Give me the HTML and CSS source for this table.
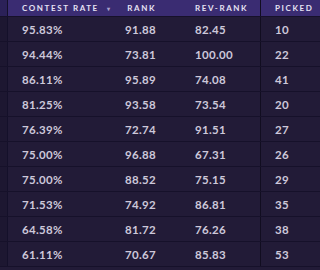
FILE: index.html
```html
<!DOCTYPE html>
<html>
<head>
<meta charset="utf-8">
<link rel="stylesheet" href="styles.css">
</head>
<body>
<div class="table">
  <div class="row head">
    <div class="cell strip"></div>
    <div class="cell c1">CONTEST RATE <span class="sort">&#9662;</span></div>
    <div class="cell c2">RANK</div>
    <div class="cell c3">REV-RANK</div>
    <div class="cell c4">PICKED</div>
  </div>
  <div class="row"><div class="cell strip"></div><div class="cell c1">95.83%</div><div class="cell c2">91.88</div><div class="cell c3">82.45</div><div class="cell c4">10</div></div>
  <div class="row"><div class="cell strip"></div><div class="cell c1">94.44%</div><div class="cell c2">73.81</div><div class="cell c3">100.00</div><div class="cell c4">22</div></div>
  <div class="row"><div class="cell strip"></div><div class="cell c1">86.11%</div><div class="cell c2">95.89</div><div class="cell c3">74.08</div><div class="cell c4">41</div></div>
  <div class="row"><div class="cell strip"></div><div class="cell c1">81.25%</div><div class="cell c2">93.58</div><div class="cell c3">73.54</div><div class="cell c4">20</div></div>
  <div class="row"><div class="cell strip"></div><div class="cell c1">76.39%</div><div class="cell c2">72.74</div><div class="cell c3">91.51</div><div class="cell c4">27</div></div>
  <div class="row"><div class="cell strip"></div><div class="cell c1">75.00%</div><div class="cell c2">96.88</div><div class="cell c3">67.31</div><div class="cell c4">26</div></div>
  <div class="row"><div class="cell strip"></div><div class="cell c1">75.00%</div><div class="cell c2">88.52</div><div class="cell c3">75.15</div><div class="cell c4">29</div></div>
  <div class="row"><div class="cell strip"></div><div class="cell c1">71.53%</div><div class="cell c2">74.92</div><div class="cell c3">86.81</div><div class="cell c4">35</div></div>
  <div class="row"><div class="cell strip"></div><div class="cell c1">64.58%</div><div class="cell c2">81.72</div><div class="cell c3">76.26</div><div class="cell c4">38</div></div>
  <div class="row"><div class="cell strip"></div><div class="cell c1">61.11%</div><div class="cell c2">70.67</div><div class="cell c3">85.83</div><div class="cell c4">53</div></div>
</div>
</body>
</html>
```
FILE: styles.css
```css
html, body {
  margin: 0;
  padding: 0;
  background: #221b37;
  overflow: hidden;
}
.table {
  width: 320px;
  font-family: Lato, "Open Sans", sans-serif;
}
.row {
  display: grid;
  grid-template-columns: 8px 108px 54px 91px 59px;
  height: 25px;
  border-bottom: 1px solid #16112a;
  box-sizing: border-box;
  color: #cdc8da;
  font-size: 11.5px;
  font-weight: 700;
  letter-spacing: 0.3px;
}
.row.head {
  height: 17px;
  background: #3a2c72;
  color: #e6e2f4;
  font-size: 8px;
  letter-spacing: 1.6px;
  border-bottom: 1px solid #16112a;
}
.cell {
  display: flex;
  align-items: center;
  white-space: nowrap;
}
.strip {
  border-right: 1px solid #14102a;
  background: #1d1731;
}
.head .strip {
  background: #2b2158;
}
.c1 {
  padding-left: 14px;
}
.sort {
  margin-left: auto;
  margin-right: 6px;
  font-size: 6px;
  color: #a9a2cc;
  letter-spacing: 0;
}
.c2 {
  justify-content: flex-end;
  padding-right: 14px;
}
.c3 {
  padding-left: 25px;
  border-right: 1px solid #110d20;
}
.c4 {
  padding-left: 14px;
}
```
